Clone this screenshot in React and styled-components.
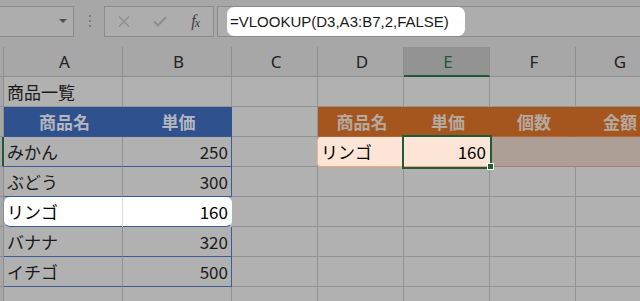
import React from "react";
import styled, { createGlobalStyle, css } from "styled-components";

const Global = createGlobalStyle`
  html, body { margin: 0; padding: 0; }
  body { background: #b1b1b1; overflow: hidden; }
`;

const Page = styled.div`
  width: 640px;
  height: 301px;
  overflow: hidden;
  background: #b1b1b1;
`;

const FormulaBar = styled.div`
  display: flex;
  align-items: flex-start;
  height: 47px;
  box-sizing: border-box;
  padding-top: 6px;
  background: #a7a7a7;
`;

const Box = styled.div`
  box-sizing: border-box;
  height: 31px;
  border: 1px solid #8b8b8b;
  background: #adadad;
  display: flex;
  align-items: center;
`;

const NameBox = styled(Box)`
  width: 75px;
  margin-left: -1px;
  justify-content: flex-end;
  padding-right: 6px;
`;

const Caret = styled.span`
  width: 0;
  height: 0;
  border-left: 4px solid transparent;
  border-right: 4px solid transparent;
  border-top: 4px solid #505050;
  margin-top: -2px;
`;

const Grip = styled.div`
  margin-left: 15px;
  margin-top: 9px;
  display: flex;
  flex-direction: column;
  gap: 3px;
`;

const GripDot = styled.span`
  width: 2px;
  height: 2px;
  background: #7d7d7d;
`;

const ButtonGroup = styled(Box)`
  width: 110px;
  margin-left: 13px;
  padding-left: 1px;
`;

const IconSlot = styled.span`
  width: 36px;
  display: flex;
  justify-content: center;
  align-items: center;
`;

const Fx = styled.span`
  font-family: "Liberation Serif", serif;
  font-style: italic;
  font-size: 16px;
  color: #3e3e3e;
  line-height: 1;
  margin-top: -2px;
  letter-spacing: -1px;
`;

const FxSub = styled.span`
  font-size: 12px;
  position: relative;
  top: 1px;
`;

const FormulaBox = styled(Box)`
  flex: 1;
  margin-left: 3px;
  margin-right: -10px;
  padding-left: 9px;
`;

const FormulaText = styled.div`
  box-sizing: border-box;
  width: 238px;
  height: 29px;
  border-radius: 7px;
  background: #ffffff;
  padding-left: 3px;
  display: flex;
  align-items: center;
  font-family: "Liberation Sans", Arial, sans-serif;
  font-size: 15px;
  color: #1a1a1a;
  white-space: nowrap;
`;

const Sheet = styled.div`
  display: grid;
  grid-template-columns: 4px 119px 109px 86px 86px 86px 86px 86px;
  grid-auto-rows: 30px;
`;

const variants = {
  plain: css`
    background: #b1b1b1;
    border-right-color: #939393;
    border-bottom-color: #939393;
    color: #1a1a1a;
  `,
  colhead: css`
    background: #a7a7a7;
    border-right-color: #8f8f8f;
    border-bottom-color: #8f8f8f;
    color: #222222;
    justify-content: center;
    font-family: "Noto Sans", "Open Sans", sans-serif;
    font-size: 17px;
  `,
  colheadSel: css`
    background: #939393;
    border-right-color: #8f8f8f;
    border-bottom: 2px solid #1e5b38;
    color: #1b5a35;
    justify-content: center;
    font-family: "Noto Sans", "Open Sans", sans-serif;
    font-size: 17px;
  `,
  rowhead: css`
    background: #a7a7a7;
    border-right-color: #8f8f8f;
    border-bottom-color: #8f8f8f;
    padding: 0;
  `,
  rowheadSel: css`
    background: #a7a7a7;
    border-right: 2px solid #1e5b38;
    border-bottom-color: #8f8f8f;
    padding: 0;
  `,
  blue: css`
    background: #2f528f;
    border-right-color: #2f528f;
    border-bottom-color: #34568f;
    color: #b3b6bd;
    font-weight: 700;
    justify-content: center;
  `,
  blueRow: css`
    background: #b1b1b1;
    border-right-color: #939393;
    border-bottom-color: #3a5c9a;
    color: #1a1a1a;
  `,
  blueRowEnd: css`
    background: #b1b1b1;
    border-right-color: #3a5c9a;
    border-bottom-color: #3a5c9a;
    color: #1a1a1a;
  `,
  spotStart: css`
    background: #ffffff;
    border-right-color: #dcdcdc;
    border-bottom-color: #3a5c9a;
    border-radius: 6px 0 0 6px;
    color: #000000;
  `,
  spotEnd: css`
    background: #ffffff;
    border-right-color: #ffffff;
    border-bottom-color: #3a5c9a;
    border-radius: 0 6px 6px 0;
    color: #000000;
  `,
  orange: css`
    background: #a5561f;
    border-right-color: #a5561f;
    border-bottom-color: #b0653a;
    color: #b6a99f;
    font-weight: 700;
    justify-content: center;
  `,
  peachStart: css`
    background: #fce4d6;
    border-right-color: #fce4d6;
    border-bottom-color: #f0a878;
    border-left: 1px solid #f2b48c;
    margin-left: -1px;
    border-radius: 4px 0 0 4px;
    color: #000000;
  `,
  peachSel: css`
    background: #fce4d6;
    border-right-color: #fce4d6;
    border-bottom-color: #f0a878;
    color: #000000;
    outline: 2px solid #1e5b38;
    position: relative;
    z-index: 1;
  `,
  peachDim: css`
    background: #ae9f96;
    border-right-color: #ae9f96;
    border-bottom-color: #ad7b5d;
    color: #1a1a1a;
  `,
};

const Cell = styled.div`
  box-sizing: border-box;
  min-width: 0;
  border-right: 1px solid;
  border-bottom: 1px solid;
  display: flex;
  align-items: center;
  justify-content: ${(p) => (p.$num ? "flex-end" : "flex-start")};
  padding: ${(p) => (p.$num ? "0 3px 0 0" : "0 0 0 3px")};
  font-family: "Noto Sans CJK JP", "Noto Sans", sans-serif;
  font-size: 17px;
  white-space: nowrap;
  overflow: visible;
  ${(p) => variants[p.$v || "plain"]}
`;

const FillHandle = styled.span`
  position: absolute;
  right: -5px;
  bottom: -4px;
  width: 5px;
  height: 5px;
  background: #1e5b38;
  border: 1px solid #ffffff;
`;

const XIcon = () => (
  <svg width="12" height="11" viewBox="0 0 12 11">
    <path d="M1 0.5 L11 10.5 M11 0.5 L1 10.5" stroke="#8e8e8e" strokeWidth="1.4" fill="none" />
  </svg>
);

const CheckIcon = () => (
  <svg width="14" height="11" viewBox="0 0 14 11">
    <path d="M1 5.5 L5 9.5 L13 1" stroke="#8e8e8e" strokeWidth="2" fill="none" />
  </svg>
);

const cols = ["A", "B", "C", "D", "E", "F", "G"];

const rows = [
  { sel: false, cells: [{ t: "商品一覧" }, {}, {}, {}, {}, {}, {}] },
  {
    sel: false,
    cells: [
      { t: "商品名", v: "blue" },
      { t: "単価", v: "blue" },
      {},
      { t: "商品名", v: "orange" },
      { t: "単価", v: "orange" },
      { t: "個数", v: "orange" },
      { t: "金額", v: "orange" },
    ],
  },
  {
    sel: true,
    cells: [
      { t: "みかん", v: "blueRow" },
      { t: "250", v: "blueRowEnd", num: true },
      {},
      { t: "リンゴ", v: "peachStart" },
      { t: "160", v: "peachSel", num: true, handle: true },
      { v: "peachDim" },
      { v: "peachDim" },
    ],
  },
  {
    cells: [
      { t: "ぶどう", v: "blueRow" },
      { t: "300", v: "blueRowEnd", num: true },
      {}, {}, {}, {}, {},
    ],
  },
  {
    cells: [
      { t: "リンゴ", v: "spotStart" },
      { t: "160", v: "spotEnd", num: true },
      {}, {}, {}, {}, {},
    ],
  },
  {
    cells: [
      { t: "バナナ", v: "blueRow" },
      { t: "320", v: "blueRowEnd", num: true },
      {}, {}, {}, {}, {},
    ],
  },
  {
    cells: [
      { t: "イチゴ", v: "blueRow" },
      { t: "500", v: "blueRowEnd", num: true },
      {}, {}, {}, {}, {},
    ],
  },
  { cells: [{}, {}, {}, {}, {}, {}, {}] },
];

export default function App() {
  return (
    <Page>
      <Global />
      <FormulaBar>
        <NameBox>
          <Caret />
        </NameBox>
        <Grip>
          <GripDot />
          <GripDot />
          <GripDot />
        </Grip>
        <ButtonGroup>
          <IconSlot>
            <XIcon />
          </IconSlot>
          <IconSlot>
            <CheckIcon />
          </IconSlot>
          <IconSlot>
            <Fx>
              f<FxSub>x</FxSub>
            </Fx>
          </IconSlot>
        </ButtonGroup>
        <FormulaBox>
          <FormulaText>=VLOOKUP(D3,A3:B7,2,FALSE)</FormulaText>
        </FormulaBox>
      </FormulaBar>
      <Sheet>
        <Cell $v="colhead" />
        {cols.map((c) => (
          <Cell key={c} $v={c === "E" ? "colheadSel" : "colhead"}>
            {c}
          </Cell>
        ))}
        {rows.map((r, ri) => (
          <React.Fragment key={ri}>
            <Cell $v={r.sel ? "rowheadSel" : "rowhead"} />
            {r.cells.map((c, ci) => (
              <Cell key={ci} $v={c.v} $num={c.num}>
                {c.t}
                {c.handle && <FillHandle />}
              </Cell>
            ))}
          </React.Fragment>
        ))}
      </Sheet>
    </Page>
  );
}
